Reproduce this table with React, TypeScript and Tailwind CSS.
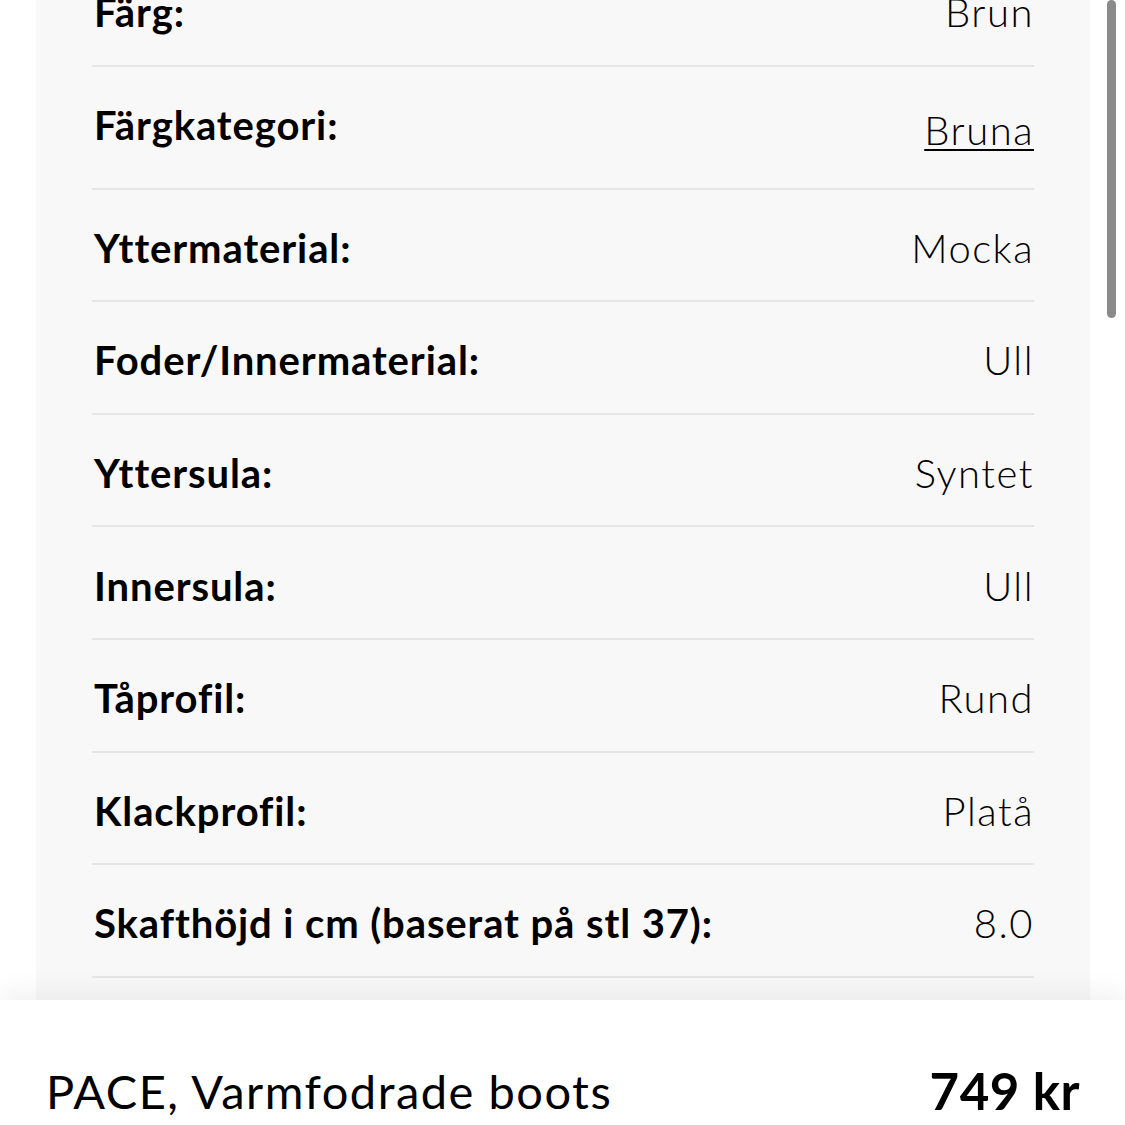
const rows: { label: string; value: string; link?: boolean }[] = [
  { label: 'Färg:', value: 'Brun' },
  { label: 'Färgkategori:', value: 'Bruna', link: true },
  { label: 'Yttermaterial:', value: 'Mocka' },
  { label: 'Foder/Innermaterial:', value: 'Ull' },
  { label: 'Yttersula:', value: 'Syntet' },
  { label: 'Innersula:', value: 'Ull' },
  { label: 'Tåprofil:', value: 'Rund' },
  { label: 'Klackprofil:', value: 'Platå' },
  { label: 'Skafthöjd i cm (baserat på stl 37):', value: '8.0' },
]

export default function App() {
  return (
    <div
      className="relative h-[1125px] w-[1125px] overflow-hidden bg-white text-black"
      style={{ fontFamily: 'Lato, "Noto Sans", sans-serif' }}
    >
      <div className="ml-[36px] w-[1054px] bg-[#f8f8f8] px-[56px] pb-[60px]">
        <div className="-mt-[46px]">
          {rows.map((r, i) => (
            <div
              key={r.label}
              className={`flex items-center justify-between border-b-2 border-[#e6e6e6] pl-[2px] ${
                i === 1 ? 'h-[123px] pb-[4px]' : 'h-[112.6px] pt-[6px]'
              }`}
            >
              <span className="text-[40px] font-bold tracking-[0.9px]">{r.label}</span>
              <span
                className={`text-[40px] font-light tracking-[1.5px] ${
                  r.link ? 'pt-[10px] underline decoration-2 underline-offset-[4px]' : ''
                }`}
              >
                {r.value}
              </span>
            </div>
          ))}
        </div>
      </div>

      <div className="absolute left-[1107px] top-0 h-[318px] w-[9px] rounded-full bg-[#8a8a8a]" />

      <div className="absolute inset-x-0 top-[1000px] h-[200px] bg-white shadow-[0_-10px_24px_rgba(0,0,0,0.05)]">
        <div className="flex items-center justify-between pl-[46px] pr-[45px] pt-[53px]">
          <span className="text-[47px] font-normal tracking-[1.5px]">PACE, Varmfodrade boots</span>
          <span className="text-[51px] font-bold tracking-[0.5px]">749 kr</span>
        </div>
      </div>
    </div>
  )
}
